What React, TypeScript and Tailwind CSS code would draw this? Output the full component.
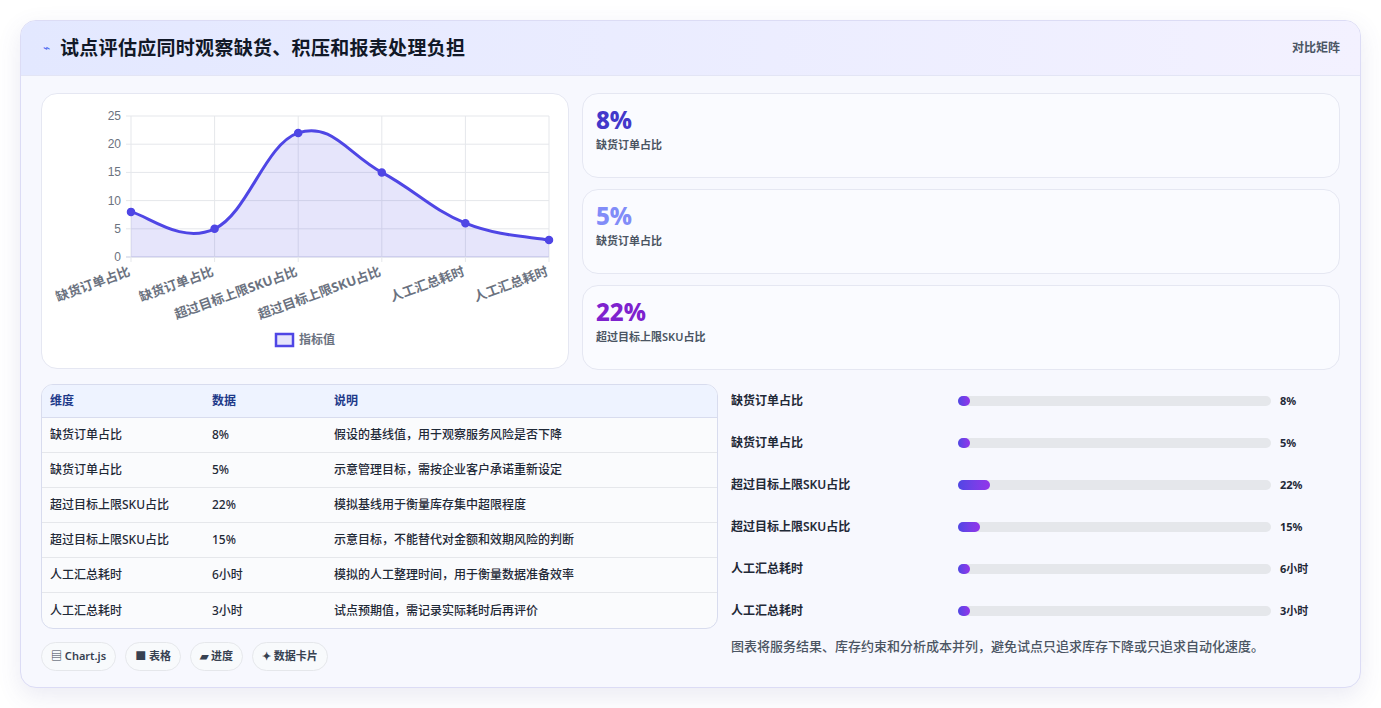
import React from "react";

const F = { fontFamily: '"Noto Sans","Noto Sans CJK SC",sans-serif' };
const vals = [8, 5, 22, 15, 6, 3];
const labels = ["缺货订单占比", "缺货订单占比", "超过目标上限SKU占比", "超过目标上限SKU占比", "人工汇总耗时", "人工汇总耗时"];
const L = 89, R = 507, T = 22, B = 163;
const px = (i: number) => L + (i * (R - L)) / 5;
const py = (v: number) => B - (v * (B - T)) / 25;

function curve() {
  const p = vals.map((v, i) => [px(i), py(v)]);
  let d = `M${p[0][0]},${p[0][1]}`;
  const t = 0.4 / 2;
  for (let i = 0; i < p.length - 1; i++) {
    const p0 = p[i - 1] || p[i], p1 = p[i], p2 = p[i + 1], p3 = p[i + 2] || p2;
    const c1 = [p1[0] + (p2[0] - p0[0]) * t, p1[1] + (p2[1] - p0[1]) * t];
    const c2 = [p2[0] - (p3[0] - p1[0]) * t, p2[1] - (p3[1] - p1[1]) * t];
    d += ` C${c1[0]},${c1[1]} ${c2[0]},${c2[1]} ${p2[0]},${p2[1]}`;
  }
  return d;
}

function Chart() {
  const d = curve();
  return (
    <svg width="527" height="275" viewBox="0 0 527 275">
      {[0, 5, 10, 15, 20, 25].map((v) => (
        <g key={v}>
          <line x1={L - 5} x2={R} y1={py(v)} y2={py(v)} stroke={v === 0 ? "#c7cbe0" : "#e5e7eb"} />
          <text x={L - 10} y={py(v) + 4} textAnchor="end" fontSize="12" fill="#6b7280" fontFamily="Liberation Sans, sans-serif">{v}</text>
        </g>
      ))}
      {vals.map((_, i) => (
        <g key={i}>
          <line x1={px(i)} x2={px(i)} y1={T} y2={B + 5} stroke="#e5e7eb" />
          <text transform={`translate(${px(i)},${B + 18}) rotate(-20)`} textAnchor="end" fontSize="13" fontWeight="700" fill="#6b7280" style={F}>{labels[i]}</text>
        </g>
      ))}
      <path d={`${d} L${R},${B} L${L},${B} Z`} fill="rgba(79,70,229,0.14)" />
      <path d={d} fill="none" stroke="#4f46e5" strokeWidth="3" />
      {vals.map((v, i) => (
        <circle key={i} cx={px(i)} cy={py(v)} r="3.5" fill="#4f46e5" stroke="#4f46e5" strokeWidth="1.5" />
      ))}
      <rect x="234" y="240" width="17" height="12" fill="rgba(79,70,229,0.14)" stroke="#4f46e5" strokeWidth="2.5" />
      <text x="257" y="250" fontSize="12" fontWeight="600" fill="#6b7280" style={F}>指标值</text>
    </svg>
  );
}

const rows = [
  ["缺货订单占比", "8%", "假设的基线值，用于观察服务风险是否下降"],
  ["缺货订单占比", "5%", "示意管理目标，需按企业客户承诺重新设定"],
  ["超过目标上限SKU占比", "22%", "模拟基线用于衡量库存集中超限程度"],
  ["超过目标上限SKU占比", "15%", "示意目标，不能替代对金额和效期风险的判断"],
  ["人工汇总耗时", "6小时", "模拟的人工整理时间，用于衡量数据准备效率"],
  ["人工汇总耗时", "3小时", "试点预期值，需记录实际耗时后再评价"],
];
const bars = [
  ["缺货订单占比", "8%", 12],
  ["缺货订单占比", "5%", 12],
  ["超过目标上限SKU占比", "22%", 32],
  ["超过目标上限SKU占比", "15%", 22],
  ["人工汇总耗时", "6小时", 12],
  ["人工汇总耗时", "3小时", 12],
] as const;

export default function App() {
  return (
    <div className="w-[1381px] h-[708px] bg-white p-5" style={F}>
      <div className="h-[668px] rounded-2xl border border-[#dcdcf5] bg-[#f7f8fe] shadow-[0_8px_24px_rgba(80,80,160,0.12)] overflow-hidden">
        <div className="h-[55px] flex items-center justify-between pl-[22px] pr-5 bg-gradient-to-r from-[#e3e8ff] to-[#f3f1ff] border-b border-[#e3e5f5]">
          <div className="flex items-center gap-2.5">
            <span className="text-[#4f6bf0] text-xs">⌁</span>
            <span className="text-[19px] font-bold text-[#111827] tracking-[0.3px]">试点评估应同时观察缺货、积压和报表处理负担</span>
          </div>
          <span className="text-xs font-semibold text-[#4b5563]">对比矩阵</span>
        </div>
        <div className="px-5 pt-[17px]">
          <div className="flex gap-[13px]">
            <div className="w-[528px] h-[276px] rounded-2xl bg-white border border-[#e5e7f2]"><Chart /></div>
            <div className="flex-1 flex flex-col gap-[11px]">
              {[["8%", "text-[#4338ca]", "缺货订单占比"], ["5%", "text-[#818cf8]", "缺货订单占比"], ["22%", "text-[#7e22ce]", "超过目标上限SKU占比"]].map(([v, c, l], i) => (
                <div key={i} className="h-[85px] rounded-2xl bg-[#fafbff] border border-[#e5e7f2] px-[13px] pt-[10px]">
                  <div className={`text-[24px] font-extrabold leading-[32px] ${c}`}>{v}</div>
                  <div className="text-[11px] font-semibold text-[#4b5563] mt-[1px]">{l}</div>
                </div>
              ))}
            </div>
          </div>
          <div className="flex gap-[13px] mt-[14px]">
            <div className="w-[677px]">
              <div className="rounded-xl border border-[#d8dcee] overflow-hidden bg-[#fafbfd] text-xs font-medium text-[#1f2937]">
                <div className="flex h-[33px] items-center bg-[#eef3ff] border-b border-[#d8dcee] font-semibold text-[#1e3a8a]">
                  <div className="w-[170px] pl-[8px]">维度</div><div className="w-[122px]">数据</div><div>说明</div>
                </div>
                {rows.map((r, i) => (
                  <div key={i} className={`flex h-[35px] items-center ${i < 5 ? "border-b border-[#e5e7eb]" : ""}`}>
                    <div className="w-[170px] pl-[8px]">{r[0]}</div><div className="w-[122px]">{r[1]}</div><div>{r[2]}</div>
                  </div>
                ))}
              </div>
              <div className="flex gap-[9px] mt-[13px]">
                {["▤ Chart.js", "■ 表格", "▰ 进度", "✦ 数据卡片"].map((c) => (
                  <span key={c} className="h-[29px] px-[9px] flex items-center rounded-full border border-[#e5e7eb] bg-[#f8fafc] text-[11px] font-semibold text-[#374151]">{c}</span>
                ))}
              </div>
            </div>
            <div className="flex-1 -mt-[4px]">
              {bars.map(([l, v, w], i) => (
                <div key={i} className="flex items-center h-[42px] text-xs font-semibold text-[#1f2937]">
                  <div className="w-[227px]">{l}</div>
                  <div className="w-[313px] h-[10px] rounded-full bg-[#e5e7eb]">
                    <div className="h-full rounded-full bg-gradient-to-r from-[#4f46e5] to-[#9333ea]" style={{ width: w }} />
                  </div>
                  <div className="ml-[9px] text-[11px] font-bold">{v}</div>
                </div>
              ))}
              <div className="text-[13px] font-medium text-[#4b5563] mt-[5px]">图表将服务结果、库存约束和分析成本并列，避免试点只追求库存下降或只追求自动化速度。</div>
            </div>
          </div>
        </div>
      </div>
    </div>
  );
}
